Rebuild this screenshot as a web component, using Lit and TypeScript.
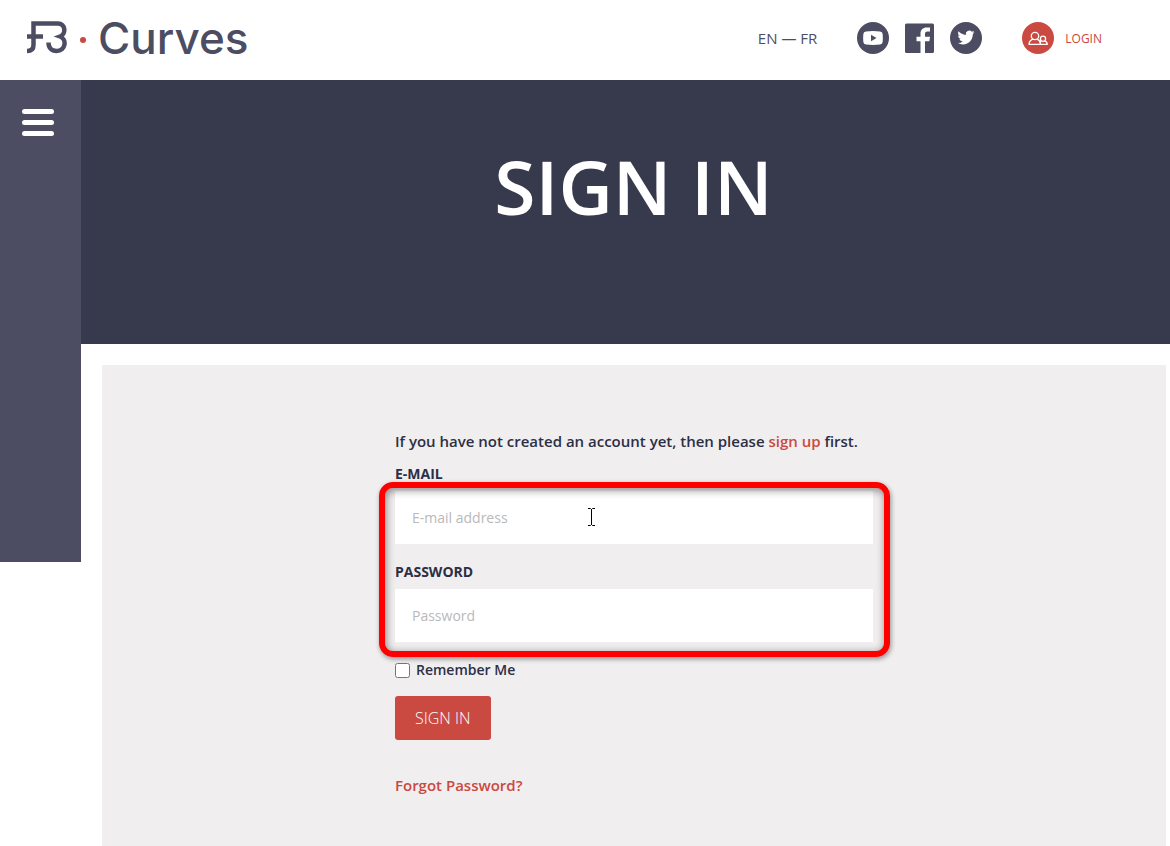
import { LitElement, html, css, svg } from "lit";
import { customElement } from "lit/decorators.js";

const brandMark = svg`
  <g fill="none" stroke="#4c4d63" stroke-width="4.500">
    <path d="M0 30C4 30 6.500 28 6.500 24V2.500H31C38.500 2.500 39.500 13 33 15.500C40 18 39 30 29.500 30C24.500 30 21.500 27 21.500 21.500"></path>
    <path d="M0 15.500h16"></path>
  </g>`;

@customElement("site-header")
export class SiteHeader extends LitElement {
  static styles = css`
    :host { display: block; background: #fff; }
    header { display: flex; align-items: center; height: 80px; padding: 0 68px 4px 27px; box-sizing: border-box; }
    a { text-decoration: none; color: inherit; }
    .brand { display: flex; align-items: center; color: #4c4d63; }
    .brand svg { display: block; }
    .dot { width: 6px; height: 6px; margin: 4px 12px 0 13px; border-radius: 50%; background: #ca4940; }
    .name { font: 500 44px/48px Inter, sans-serif; }
    .tools { display: flex; align-items: center; margin-left: auto; }
    .langs { font-size: 15px; line-height: 24px; font-weight: 500; color: #4c4d63; }
    .social { display: flex; gap: 16px; margin: 0 40px; }
    .social svg, .login svg { display: block; }
    .login { display: flex; align-items: center; gap: 11px; color: #ca4940; font-size: 12px; font-weight: 500; }
  `;
  render() {
    return html`
      <header>
        <a class="brand" href="#" aria-label="F3 Curves">
          <svg width="40" height="34" viewBox="0 0 40 34" aria-hidden="true">${brandMark}</svg>
          <span class="dot"></span>
          <span class="name">Curves</span>
        </a>
        <div class="tools">
          <nav class="langs" aria-label="Language"><a href="#">EN</a> — <a href="#">FR</a></nav>
          <nav class="social" aria-label="Social">
            <a href="#" aria-label="YouTube">
              <svg width="32" height="32" viewBox="0 0 32 32">
                <circle cx="16" cy="16" r="16" fill="#4c4d63"></circle>
                <path fill="#fff" d="M9 9.500Q16 8.500 23 9.500Q25.500 9.800 25.700 12.300Q26 16 25.700 19.700Q25.500 22.200 23 22.500Q16 23.300 9 22.500Q6.500 22.200 6.300 19.700Q6 16 6.300 12.300Q6.500 9.800 9 9.500Z"></path>
                <path fill="#4c4d63" d="M14 12.800l5.500 3.200l-5.500 3.200z"></path>
              </svg>
            </a>
            <a href="#" aria-label="Facebook">
              <svg width="29" height="32" viewBox="0 0 29 32">
                <path fill="#4c4d63" d="M1.500 1.500h26q1.500 0 1.500 1.500v26.500q0 1.500-1.500 1.500h-26q-1.500 0-1.500-1.500v-26.500q0-1.500 1.500-1.500z"></path>
                <path fill="#fff" d="M15.500 31V19.200H11.500V14.800H15.500V11.500C15.500 7.500 18 5.400 21.500 5.400H25V9.600H22.500C20.500 9.600 20 10.600 20 12V14.800H25L24.300 19.200H20V31Z"></path>
              </svg>
            </a>
            <a href="#" aria-label="Twitter">
              <svg width="32" height="32" viewBox="0 0 32 32">
                <circle cx="16" cy="16" r="16" fill="#4c4d63"></circle>
                <path transform="translate(7.500 7) scale(.71)" fill="#fff" d="M23.950 4.570a10 10 0 0 1-2.820.77 4.960 4.960 0 0 0 2.160-2.720c-.95.56-2 .96-3.120 1.180a4.920 4.920 0 0 0-8.380 4.480C7.690 8.090 4.070 6.130 1.640 3.160a4.920 4.920 0 0 0 1.520 6.570 4.900 4.900 0 0 1-2.230-.61v.06a4.920 4.920 0 0 0 3.950 4.830 5 5 0 0 1-2.210.08 4.940 4.940 0 0 0 4.600 3.420A9.870 9.870 0 0 1 0 19.540a13.990 13.990 0 0 0 7.550 2.210c9.050 0 14-7.500 14-13.980 0-.21 0-.42-.02-.63a9.940 9.940 0 0 0 2.420-2.570z"></path>
              </svg>
            </a>
          </nav>
          <a class="login" href="#">
            <svg width="32" height="32" viewBox="0 0 32 32" aria-hidden="true">
              <circle cx="16" cy="16" r="16" fill="#ca4940"></circle>
              <g fill="none" stroke="#fff" stroke-width="1.300" stroke-linejoin="round">
                <circle cx="13" cy="14" r="3.700"></circle>
                <path d="M10.800 17.200C8.500 18.200 7.200 19.800 7 22.300H18.500C18.400 19.800 17.400 18.200 15.200 17.200"></path>
                <circle cx="21" cy="16.800" r="2.600"></circle>
                <path d="M19.300 18.900l-1.600 1.200M22.600 18.900C24.300 19.500 25.200 20.500 25.300 22.300H18.500"></path>
              </g>
            </svg>
            <span>LOGIN</span>
          </a>
        </div>
      </header>`;
  }
}

@customElement("sign-in-form")
export class SignInForm extends LitElement {
  static styles = css`
    :host { display: block; width: 100%; max-width: 478px; }
    form { display: flex; flex-direction: column; align-items: flex-start; color: #2c2f45; font-size: 15px; line-height: 24px; font-weight: 600; }
    p { margin: 0 0 9px; }
    a { color: #ca4940; text-decoration: none; }
    .fields { position: relative; display: flex; flex-direction: column; gap: 16px; width: 100%; }
    .field { display: flex; flex-direction: column; gap: 5px; }
    .field label { font-size: 14px; font-weight: 700; }
    .field input { width: 100%; height: 53px; box-sizing: border-box; padding: 0 17px; border: 0; border-radius: 0; outline: 0; background: #fff; color: #2c2f45; font: 500 14px "Open Sans", sans-serif; }
    .field input::placeholder { color: #b9b9b9; opacity: 1; }
    .marker { position: absolute; inset: 20px -17px -15px -16px; border: 6px solid #f00; border-radius: 14px; box-shadow: 1px 2px 5px rgba(0, 0, 0, .4), inset 1px 2px 9px rgba(0, 0, 0, .45); pointer-events: none; }
    .pointer { position: absolute; top: 46px; left: 192px; pointer-events: none; }
    .remember { display: flex; align-items: center; gap: 6px; margin: 16px 0 14px; }
    .remember input { width: 15px; height: 15px; margin: 1px 0 0; }
    .remember label { font-size: 14px; }
    button { height: 44px; padding: 0 20px; border: 0; border-radius: 3px; background: #ca4940; color: #fff; font: 300 16px "Open Sans", sans-serif; }
    .forgot { margin-top: 33px; }
  `;
  render() {
    return html`
      <form @submit=${(e: Event) => e.preventDefault()}>
        <p>If you have not created an account yet, then please <a href="#">sign up</a> first.</p>
        <div class="fields">
          <div class="field">
            <label for="email">E-MAIL</label>
            <input id="email" type="email" placeholder="E-mail address" />
          </div>
          <div class="field">
            <label for="password">PASSWORD</label>
            <input id="password" type="password" placeholder="Password" />
          </div>
          <div class="marker"></div>
          <svg class="pointer" width="9" height="18" viewBox="0 0 9 18" aria-hidden="true">
            <path fill="none" stroke="#000" d="M1 .500h2.500l1 1l1-1H8M4.500 1v16M1 17.500h2.500l1-1l1 1H8"></path>
          </svg>
        </div>
        <div class="remember">
          <input id="remember" type="checkbox" />
          <label for="remember">Remember Me</label>
        </div>
        <button type="submit">SIGN IN</button>
        <a class="forgot" href="#">Forgot Password?</a>
      </form>`;
  }
}

@customElement("app-root")
export class AppRoot extends LitElement {
  static styles = css`
    :host { display: flex; flex-direction: column; min-height: 100vh; background: #fff; font-family: "Open Sans", sans-serif; }
    .body { flex: 1; display: grid; grid-template-columns: 81px minmax(0, 1fr); }
    aside { align-self: start; height: 57vh; padding: 29px 22px; box-sizing: border-box; background: #4c4d63; }
    .menu { display: flex; flex-direction: column; gap: 6px; width: 32px; padding: 0; border: 0; background: none; }
    .menu span { height: 5px; border-radius: 3px; background: #fff; }
    main { display: flex; flex-direction: column; }
    .hero { height: 264px; padding-top: 61px; box-sizing: border-box; background: #37394c; text-align: center; }
    h1 { margin: 0; padding-left: 16px; color: #fff; font-size: 75px; line-height: 90px; font-weight: 600; }
    .card { flex: 1; display: flex; justify-content: center; margin: 21px 4px 0 21px; padding: 64px 24px 49px; background: #f0eeef; }
  `;
  render() {
    return html`
      <site-header></site-header>
      <div class="body">
        <aside>
          <button class="menu" aria-label="Menu"><span></span><span></span><span></span></button>
        </aside>
        <main>
          <section class="hero"><h1>SIGN IN</h1></section>
          <section class="card"><sign-in-form></sign-in-form></section>
        </main>
      </div>`;
  }
}
